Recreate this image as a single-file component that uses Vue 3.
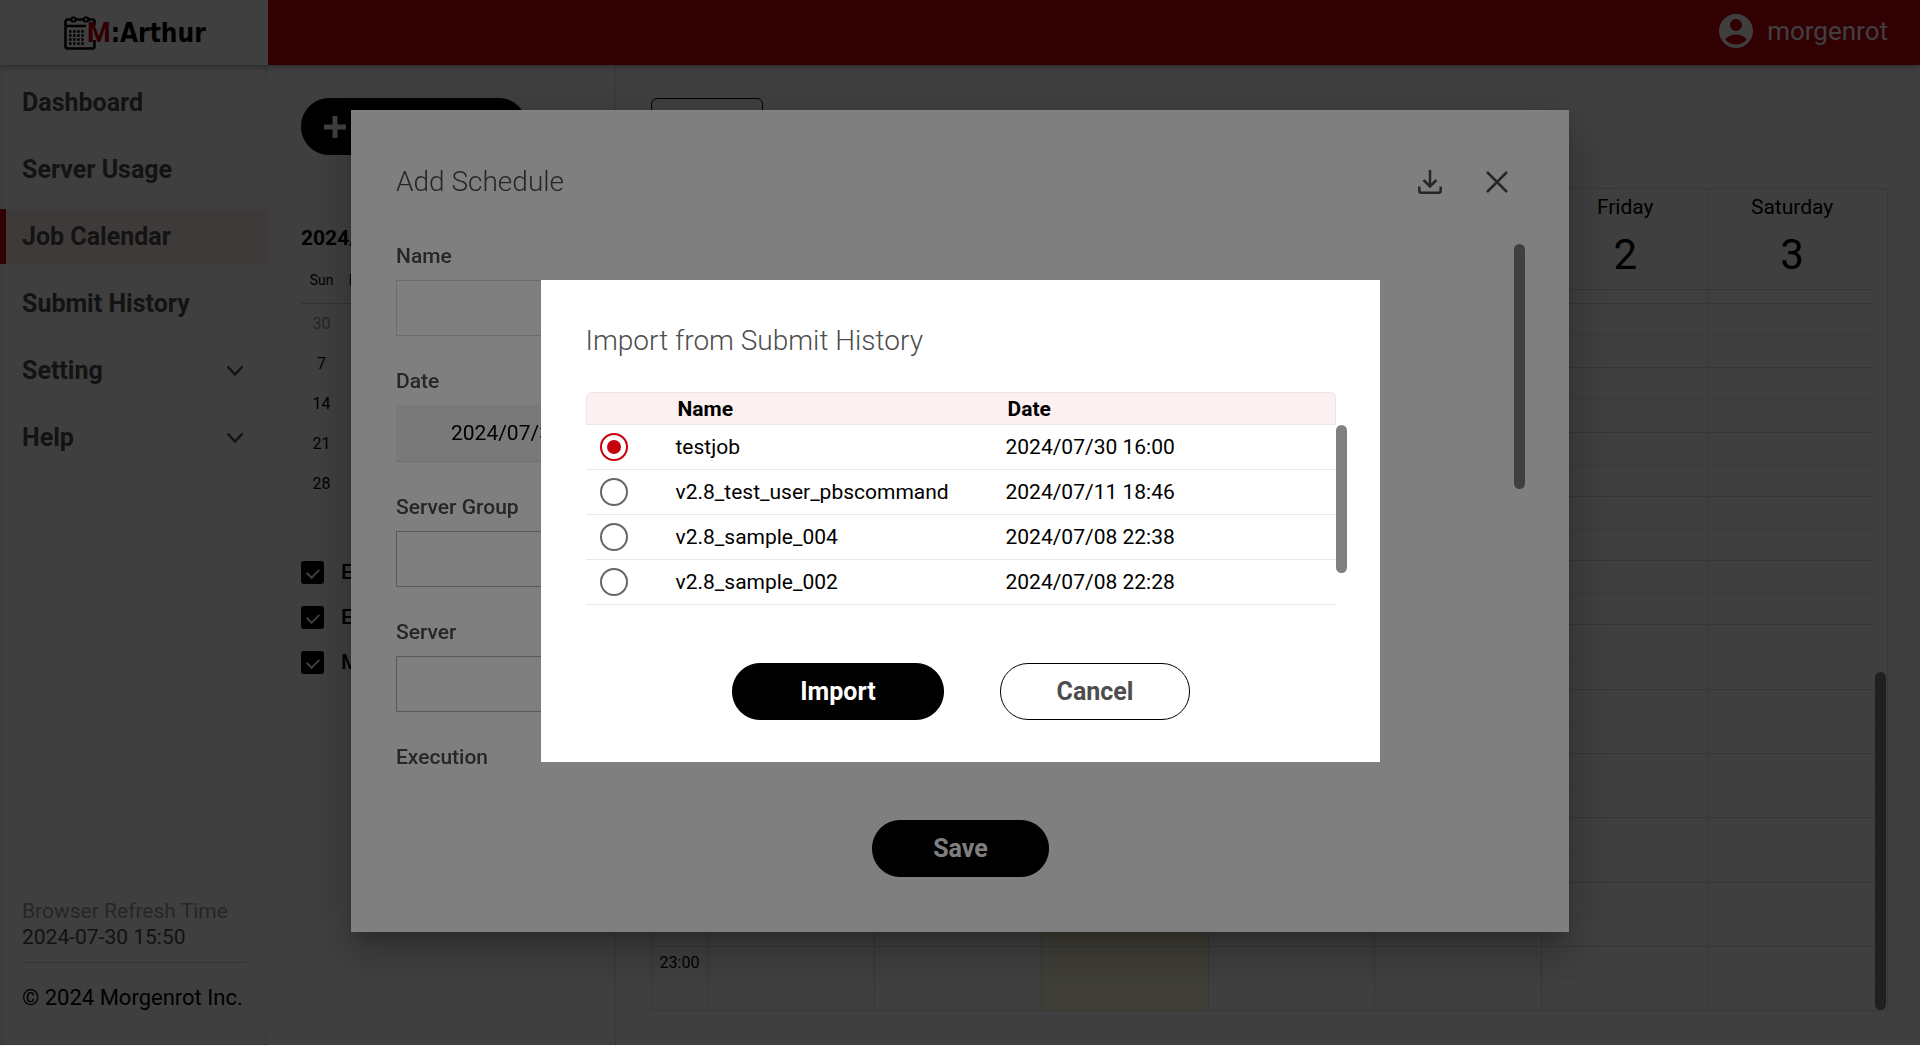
<!-- src/views/JobCalendar.vue -->
<template>
  <div class="app">
    <header class="app-header">
      <a href="#" class="logo" aria-label="M:Arthur">
        <svg class="logo-icon" viewBox="0 0 32 34" fill="none" stroke="#000" aria-hidden="true">
          <path d="M30.500 9V5.500a2 2 0 0 0-2-2h-25a2 2 0 0 0-2 2v25a2 2 0 0 0 2 2h25a2 2 0 0 0 2-2V24" stroke-width="2.500" />
          <path d="M2 10h20" stroke-width="2.500" />
          <rect x="7.500" y="1.500" width="4" height="4" rx="1" fill="#fff" stroke-width="2" />
          <rect x="20" y="1.500" width="4" height="4" rx="1" fill="#fff" stroke-width="2" />
          <path d="M5 15.500h15M5 19.500h15M5 23.500h15M5 27.500h15" stroke-width="2.500" stroke-dasharray="2.500 1.600" />
        </svg>
        <span class="logo-m">M</span><span class="logo-name">:Arthur</span>
      </a>
      <div class="user">
        <svg class="user-icon" viewBox="2 2 20 20" fill="currentColor" aria-hidden="true">
          <path d="M12 2C6.480 2 2 6.480 2 12s4.480 10 10 10 10-4.480 10-10S17.520 2 12 2zm0 3c1.930 0 3.500 1.570 3.500 3.500S13.930 12 12 12s-3.500-1.570-3.500-3.500S10.070 5 12 5zm0 15c-2.500 0-4.800-1.100-6.300-3 .6-1.700 3.900-3 6.300-3s5.700 1.300 6.300 3c-1.500 1.900-3.800 3-6.300 3z" />
        </svg>
        <span>morgenrot</span>
      </div>
    </header>

    <div class="app-body">
      <!-- Sidebar -->
      <aside class="sidebar">
        <nav class="menu">
          <a
            v-for="item in menu"
            :key="item.label"
            href="#"
            class="menu-item"
            :class="{ active: item.active }"
          >
            {{ item.label }}
            <svg v-if="item.children" class="chevron" viewBox="0 0 18 12" fill="none" stroke="currentColor" stroke-width="2.500" aria-hidden="true">
              <path d="M1.500 1.500 9 9.500l7.500-8" />
            </svg>
          </a>
        </nav>
        <div class="sidebar-footer">
          <div class="refresh">
            <div class="refresh-label">Browser Refresh Time</div>
            <div>2024-07-30 15:50</div>
          </div>
          <div class="copyright">© 2024 Morgenrot Inc.</div>
        </div>
      </aside>

      <!-- Mini calendar and filters -->
      <section class="panel">
        <button type="button" class="btn btn-add" aria-label="Add">
          <svg class="plus" viewBox="0 0 22 22" fill="none" stroke="currentColor" stroke-width="5" aria-hidden="true">
            <path d="M11 0v22M0 11h22" />
          </svg>
        </button>
        <h2 class="month">2024/07</h2>
        <table class="mini-calendar">
          <thead>
            <tr>
              <th v-for="day in days" :key="day.name">{{ day.name.slice(0, 3) }}</th>
            </tr>
          </thead>
          <tbody>
            <tr v-for="(week, i) in weeks" :key="i">
              <td v-for="(d, j) in week" :key="j" :class="{ other: i === 0 && d > 20 }">{{ d }}</td>
            </tr>
          </tbody>
        </table>
        <div class="filters">
          <label v-for="(f, i) in filters" :key="i" class="filter">
            <input v-model="f.checked" type="checkbox" />
            <span>{{ f.label }}</span>
          </label>
        </div>
      </section>

      <!-- Week calendar -->
      <main class="main">
        <button type="button" class="btn-today">Today</button>
        <div class="week">
          <div class="week-head">
            <div class="time-cell"></div>
            <div v-for="day in days" :key="day.name" class="day-head">
              <span class="day-name">{{ day.name }}</span>
              <span class="day-date">{{ day.date }}</span>
            </div>
            <div class="gutter"></div>
          </div>
          <div class="week-body">
            <div class="slots">
              <div class="slot slot-cut">
                <div class="time-cell"></div>
                <div v-for="day in days" :key="day.name" class="slot-cell" :class="{ today: day.today }"></div>
              </div>
              <div v-for="slot in slots" :key="slot.id" class="slot">
                <div class="time-cell">{{ slot.label }}</div>
                <div v-for="day in days" :key="day.name" class="slot-cell" :class="{ today: day.today }"></div>
              </div>
            </div>
            <div class="gutter"><div class="thumb thumb-week"></div></div>
          </div>
        </div>
      </main>
    </div>

    <!-- Add schedule -->
    <div class="overlay">
      <div class="modal" role="dialog" aria-labelledby="schedule-title">
        <div class="modal-header">
          <h1 id="schedule-title" class="modal-title">Add Schedule</h1>
          <button type="button" class="icon-btn" aria-label="Import">
            <svg width="24" height="24" viewBox="0 0 24 24" fill="none" stroke="currentColor" stroke-width="2.500" aria-hidden="true">
              <path d="M12 0v16M5.500 10l6.500 6.500 6.500-6.500M1.300 16.500v4.200a2 2 0 0 0 2 2h17.400a2 2 0 0 0 2-2v-4.200" />
            </svg>
          </button>
          <button type="button" class="icon-btn" aria-label="Close">
            <svg width="24" height="24" viewBox="0 0 24 24" fill="none" stroke="currentColor" stroke-width="2.500" aria-hidden="true">
              <path d="M2 2l20 20M22 2 2 22" />
            </svg>
          </button>
        </div>
        <div class="modal-body">
          <form class="form" @submit.prevent>
            <div class="field">
              <label for="name">Name</label>
              <input id="name" v-model="form.name" type="text" class="control" />
            </div>
            <div class="field">
              <label for="date">Date</label>
              <input id="date" v-model="form.date" type="text" class="control control-date" />
            </div>
            <div class="field">
              <label for="group">Server Group</label>
              <select id="group" v-model="form.group" class="control control-select"></select>
            </div>
            <div class="field">
              <label for="server">Server</label>
              <select id="server" v-model="form.server" class="control control-select"></select>
            </div>
            <div class="field">
              <span class="field-title">Execution</span>
            </div>
          </form>
          <div class="thumb thumb-form"></div>
        </div>
        <div class="modal-footer">
          <button type="button" class="btn btn-save">Save</button>
        </div>
      </div>
    </div>

    <!-- Import from submit history -->
    <div class="overlay">
      <div class="dialog" role="dialog" aria-labelledby="import-title">
        <h1 id="import-title" class="modal-title">Import from Submit History</h1>
        <div class="history">
          <table class="history-table">
            <thead>
              <tr>
                <th class="col-radio"></th>
                <th class="col-name">Name</th>
                <th class="col-date">Date</th>
              </tr>
            </thead>
            <tbody>
              <tr v-for="job in jobs" :key="job.name">
                <td class="col-radio">
                  <input :id="job.name" v-model="selected" type="radio" name="job" :value="job.name" />
                </td>
                <td><label :for="job.name">{{ job.name }}</label></td>
                <td>{{ job.date }}</td>
              </tr>
            </tbody>
          </table>
          <div class="thumb thumb-history"></div>
        </div>
        <div class="dialog-footer">
          <button type="button" class="btn btn-import">Import</button>
          <button type="button" class="btn btn-cancel">Cancel</button>
        </div>
      </div>
    </div>
  </div>
</template>

<script setup>
import { ref, reactive } from 'vue';

const menu = [
  { label: 'Dashboard' },
  { label: 'Server Usage' },
  { label: 'Job Calendar', active: true },
  { label: 'Submit History' },
  { label: 'Setting', children: true },
  { label: 'Help', children: true }
];

const days = [
  { name: 'Sunday', date: 28 },
  { name: 'Monday', date: 29 },
  { name: 'Tuesday', date: 30, today: true },
  { name: 'Wednesday', date: 31 },
  { name: 'Thursday', date: 1 },
  { name: 'Friday', date: 2 },
  { name: 'Saturday', date: 3 }
];

const weeks = [
  [30, 1, 2, 3, 4, 5, 6],
  [7, 8, 9, 10, 11, 12, 13],
  [14, 15, 16, 17, 18, 19, 20],
  [21, 22, 23, 24, 25, 26, 27],
  [28, 29, 30, 31, 1, 2, 3]
];

// Half-hour slots, the last hour carries its label
const slots = Array.from({ length: 22 }, (_, i) => ({
  id: i,
  label: i === 20 ? '23:00' : ''
}));

const filters = reactive([
  { label: 'E', checked: true },
  { label: 'E', checked: true },
  { label: 'M', checked: true }
]);

const form = reactive({ name: '', date: '2024/07/30', group: '', server: '' });

const jobs = [
  { name: 'testjob', date: '2024/07/30 16:00' },
  { name: 'v2.8_test_user_pbscommand', date: '2024/07/11 18:46' },
  { name: 'v2.8_sample_004', date: '2024/07/08 22:38' },
  { name: 'v2.8_sample_002', date: '2024/07/08 22:28' }
];
const selected = ref('testjob');
</script>

<style>
body {
  background: #fff;
}
</style>

<style scoped>
* {
  box-sizing: border-box;
}

.app {
  display: flex;
  flex-direction: column;
  min-height: 100vh;
  font-family: Roboto, "Liberation Sans", sans-serif;
  font-size: 21px;
  color: #000;
}

button,
input,
select {
  font-family: inherit;
}

a {
  color: inherit;
  text-decoration: none;
}

/* Header */
.app-header {
  display: flex;
  height: 65px;
  background: #c7000b;
  box-shadow: 0 2px 6px rgba(0, 0, 0, 0.3);
  position: relative;
}

.logo {
  display: flex;
  align-items: center;
  flex: none;
  width: 268px;
  padding-left: 64px;
  background: #fff;
}

.logo-icon {
  width: 32px;
  height: 34px;
  flex: none;
}

.logo-m {
  margin-left: -9px;
  font-size: 27px;
  font-weight: 700;
  color: #c7000b;
}

.logo-name {
  font-family: "DejaVu Sans Condensed", "DejaVu Sans", sans-serif;
  font-size: 26px;
  font-weight: 700;
}

.user {
  display: flex;
  align-items: center;
  gap: 14px;
  margin-left: auto;
  padding: 0 32px 3px 0;
  font-size: 26px;
  color: #fff;
}

.user-icon {
  width: 34px;
  height: 34px;
}

.app-body {
  display: flex;
  flex: 1;
}

/* Sidebar */
.sidebar {
  display: flex;
  flex-direction: column;
  flex: none;
  width: 268px;
  padding-top: 10px;
  box-shadow: inset 0 0 8px rgba(0, 0, 0, 0.1);
}

.menu {
  display: flex;
  flex-direction: column;
  gap: 12px;
}

.menu-item {
  display: flex;
  align-items: center;
  justify-content: space-between;
  height: 55px;
  padding: 0 24px 0 16px;
  border-left: 6px solid transparent;
  font-size: 25px;
  font-weight: 700;
  color: #4d4d4d;
}

.menu-item.active {
  border-left-color: #c7000b;
  background: #fbebe9;
}

.chevron {
  width: 18px;
  height: 12px;
}

.sidebar-footer {
  margin-top: auto;
  padding: 0 22px 35px 22px;
}

.refresh {
  padding-bottom: 12px;
  border-bottom: 1px solid #ccc;
  line-height: 26px;
  color: #4d4d4d;
}

.refresh-label {
  color: #999;
}

.copyright {
  padding-top: 22px;
  font-size: 22px;
  line-height: 26px;
  white-space: nowrap;
}

/* Mini calendar panel */
.panel {
  flex: none;
  width: 348px;
  padding: 33px 26px 0 33px;
  border-right: 1px solid #e6e6e6;
}

.btn {
  height: 57px;
  border: 1px solid #000;
  border-radius: 28px;
  background: #000;
  font-size: 25px;
  font-weight: 700;
  color: #fff;
}

.btn-add {
  display: flex;
  align-items: center;
  width: 226px;
  padding: 0 22px;
}

.plus {
  width: 22px;
  height: 22px;
}

.month {
  margin: 71px 0 0;
  font-size: 21px;
  line-height: 24px;
  font-weight: 700;
}

.mini-calendar {
  width: 100%;
  margin-top: 14px;
  border-collapse: collapse;
  table-layout: fixed;
  text-align: center;
}

.mini-calendar th {
  height: 39px;
  padding: 0 0 6px;
  border-bottom: 1px solid #ccc;
  font-size: 14px;
  font-weight: 400;
}

.mini-calendar td {
  height: 40px;
  padding: 0;
  font-size: 16px;
}

.mini-calendar .other {
  color: #999;
}

.filters {
  display: flex;
  flex-direction: column;
  gap: 21px;
  margin-top: 57px;
}

.filter {
  display: flex;
  align-items: center;
  gap: 17px;
  height: 24px;
  font-weight: 500;
}

.filter input {
  appearance: none;
  display: grid;
  place-items: center;
  width: 23px;
  height: 23px;
  margin: 0;
  border-radius: 3px;
  background: #000;
}

.filter input:checked::before {
  content: "";
  width: 10px;
  height: 6px;
  border: solid #fff;
  border-width: 0 0 2px 2px;
  transform: rotate(-45deg);
}

/* Week calendar */
.main {
  display: flex;
  flex-direction: column;
  align-items: flex-start;
  flex: 1;
  gap: 34px;
  padding: 33px 32px 35px 35px;
}

.btn-today {
  width: 112px;
  height: 56px;
  border: 1px solid #000;
  border-radius: 6px;
  background: #fff;
  font-size: 21px;
}

.week {
  display: flex;
  flex-direction: column;
  flex: 1;
  width: 100%;
  border: 1px solid #ddd;
}

.week-head {
  display: flex;
  height: 101px;
}

.time-cell {
  display: flex;
  align-items: center;
  justify-content: center;
  width: 56px;
  border-right: 1px solid #ddd;
  font-size: 16px;
}

.day-head {
  display: flex;
  flex-direction: column;
  align-items: center;
  flex: 1;
  padding-top: 6px;
  border-bottom: 1px solid #d6d6d6;
}

.day-head + .day-head,
.slot-cell + .slot-cell {
  border-left: 1px solid #ddd;
}

.day-name {
  line-height: 24px;
}

.day-date {
  margin-top: 12px;
  font-size: 42px;
  line-height: 48px;
}

.gutter {
  display: flex;
  align-items: flex-end;
  width: 12px;
}

.week-body {
  display: flex;
  flex: 1;
}

.slots {
  display: flex;
  flex-direction: column;
  flex: 1;
}

.slot {
  display: flex;
  flex: 1;
  border-top: 1px solid #d9d9d9;
}

.slot:nth-child(odd) {
  border-top: 1px dotted #ddd;
}

.slot.slot-cut {
  flex: none;
  height: 13px;
  border-top: none;
}

.slot-cell {
  flex: 1;
}

.slot-cell.today {
  background: #fffadf;
}

.thumb {
  width: 11px;
  border-radius: 6px;
  background: #808080;
}

.thumb-week {
  height: 47%;
}

/* Modals */
.overlay {
  position: fixed;
  inset: 0 0 1px;
  display: flex;
  align-items: center;
  justify-content: center;
  padding-bottom: 3px;
  background: rgba(0, 0, 0, 0.5);
}

.modal {
  width: 90%;
  max-width: 1218px;
  padding: 54px 44px 55px 45px;
  background: #fff;
  box-shadow: 0 11px 15px -7px rgba(0, 0, 0, 0.2), 0 24px 38px 3px rgba(0, 0, 0, 0.14), 0 9px 46px 8px rgba(0, 0, 0, 0.12);
}

.modal-header {
  display: flex;
  align-items: center;
  gap: 43px;
  height: 36px;
  padding-right: 16px;
}

.modal-title {
  flex: 1;
  margin: 0;
  font-size: 28px;
  line-height: 36px;
  font-weight: 300;
  color: #4d4d4d;
}

.icon-btn {
  display: flex;
  padding: 0;
  border: none;
  background: none;
  color: #4d4d4d;
}

.modal-body {
  display: flex;
  justify-content: space-between;
  height: 531px;
  margin-top: 44px;
  overflow: hidden;
}

.form {
  display: flex;
  flex-direction: column;
  gap: 33px;
  flex: 1;
  max-width: 900px;
}

.field {
  display: flex;
  flex-direction: column;
  gap: 12px;
  line-height: 24px;
  font-weight: 500;
  color: #4d4d4d;
}

.control {
  width: 100%;
  height: 56px;
  padding: 0 16px;
  border: 1px solid #d9d9d9;
  border-radius: 0;
  background: #fff;
  font-size: 21px;
  color: #000;
}

.control-date {
  height: 57px;
  padding-left: 55px;
  border: none;
  border-bottom: 1px solid #e0e0e0;
  background: #f3f3f3;
}

.control-select {
  appearance: none;
  border-color: #b3b3b3;
}

.thumb-form {
  height: 245px;
}

.modal-footer {
  display: flex;
  justify-content: center;
  margin-top: 45px;
}

.btn-save {
  width: 177px;
}

.dialog {
  width: 90%;
  max-width: 839px;
  padding: 43px 33px 42px 45px;
  background: #fff;
}

.history {
  display: flex;
  margin-top: 33px;
}

.history-table {
  flex: 1;
  border-collapse: separate;
  border-spacing: 0;
  table-layout: fixed;
  font-size: 21px;
  text-align: left;
}

.history-table th {
  height: 33px;
  padding: 0 0 0 2px;
  border: solid #e8e8e8;
  border-width: 1px 0;
  background: #fcf0f0;
  font-weight: 700;
}

.history-table th:first-child {
  border-left-width: 1px;
  border-top-left-radius: 6px;
}

.history-table th:last-child {
  border-right-width: 1px;
  border-top-right-radius: 6px;
}

.history-table td {
  height: 45px;
  padding: 0;
  border-bottom: 1px solid #e8e8e8;
}

.col-radio {
  width: 90px;
}

.col-name {
  width: 330px;
}

.history-table td.col-radio {
  padding-left: 14px;
}

.history-table input {
  appearance: none;
  display: grid;
  place-items: center;
  width: 28px;
  height: 28px;
  margin: 0;
  border: 2px solid #666;
  border-radius: 50%;
}

.history-table input:checked {
  border-color: #c7000b;
}

.history-table input:checked::before {
  content: "";
  width: 14px;
  height: 14px;
  border-radius: 50%;
  background: #c7000b;
}

.thumb-history {
  height: 148px;
  margin-top: 33px;
}

.dialog-footer {
  display: flex;
  justify-content: center;
  gap: 56px;
  margin-top: 58px;
  padding-right: 10px;
}

.btn-import {
  width: 212px;
}

.btn-cancel {
  width: 190px;
  background: #fff;
  color: #4d4d4d;
}
</style>
